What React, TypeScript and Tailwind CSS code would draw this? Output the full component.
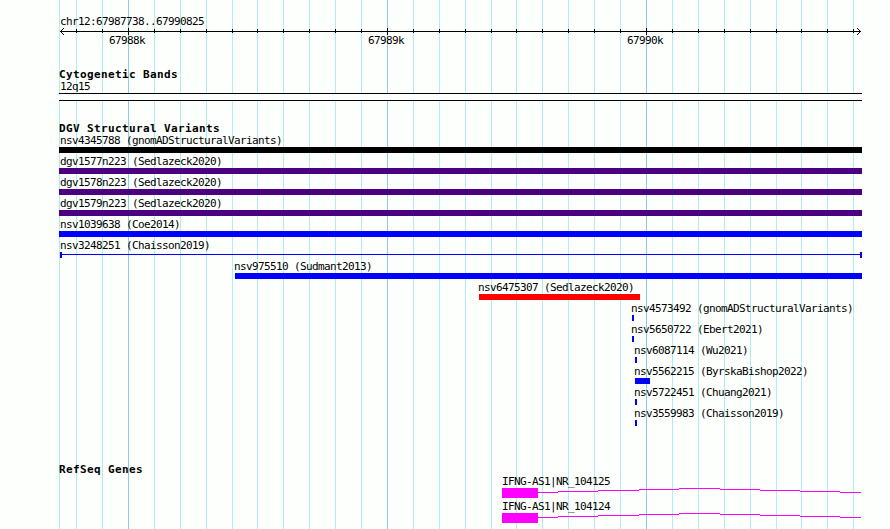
import clsx from 'clsx';

type Variant = {
  name: string;
  start: number;
  end: number;
  color: string;
  label?: number;
  thin?: boolean;
};

const minorLines = [
  59, 76, 102, 154, 180, 206, 232, 257, 283, 309, 335, 361, 413, 439, 465, 491,
  516, 542, 568, 594, 620, 672, 698, 724, 750, 776, 801, 827, 853,
];
const majorLines = [128, 387, 646];

// positions are relative to the left edge of the track (59px)
const variants: Variant[] = [
  { name: 'nsv4345788 (gnomADStructuralVariants)', start: 0, end: 803, color: 'bg-black', label: 1 },
  { name: 'dgv1577n223 (Sedlazeck2020)', start: 0, end: 803, color: 'bg-[#4b0082]', label: 1 },
  { name: 'dgv1578n223 (Sedlazeck2020)', start: 0, end: 803, color: 'bg-[#4b0082]', label: 1 },
  { name: 'dgv1579n223 (Sedlazeck2020)', start: 0, end: 803, color: 'bg-[#4b0082]', label: 1 },
  { name: 'nsv1039638 (Coe2014)', start: 0, end: 803, color: 'bg-[#0000ff]', label: 1 },
  { name: 'nsv3248251 (Chaisson2019)', start: 1, end: 803, color: 'bg-[#0000ff]', label: 1, thin: true },
  { name: 'nsv975510 (Sudmant2013)', start: 176, end: 803, color: 'bg-[#0000ff]' },
  { name: 'nsv6475307 (Sedlazeck2020)', start: 420, end: 581, color: 'bg-[#ff0000]' },
  { name: 'nsv4573492 (gnomADStructuralVariants)', start: 573, end: 575, color: 'bg-[#0000ff]' },
  { name: 'nsv5650722 (Ebert2021)', start: 573, end: 575, color: 'bg-[#0000ff]' },
  { name: 'nsv6087114 (Wu2021)', start: 576, end: 578, color: 'bg-[#0000ff]' },
  { name: 'nsv5562215 (ByrskaBishop2022)', start: 576, end: 591, color: 'bg-[#0000ff]' },
  { name: 'nsv5722451 (Chuang2021)', start: 576, end: 578, color: 'bg-[#0000ff]' },
  { name: 'nsv3559983 (Chaisson2019)', start: 576, end: 578, color: 'bg-[#0000ff]' },
];

const genes = ['IFNG-AS1|NR_104125', 'IFNG-AS1|NR_104124'];

function GridLines() {
  return (
    <svg className="absolute inset-0 -z-10" width="890" height="529" shapeRendering="crispEdges">
      {minorLines.map((x) => (
        <rect key={x} x={x} y="0" width="1" height="529" fill="#afeeee" />
      ))}
      {majorLines.map((x) => (
        <rect key={x} x={x} y="0" width="1" height="529" fill="#87ceeb" />
      ))}
    </svg>
  );
}

function Ruler() {
  return (
    <svg className="block" width="803" height="7" viewBox="59 28 803 7" shapeRendering="crispEdges">
      <rect x="60" y="31" width="801" height="1" />
      {minorLines.slice(1).map((x) => (
        <rect key={x} x={x} y="29" width="1" height="4" />
      ))}
      {majorLines.map((x) => (
        <rect key={x} x={x} y="28" width="1" height="7" />
      ))}
      {/* arrow heads */}
      {[1, 2, 3].map((d) => (
        <g key={d}>
          <rect x={60 + d} y={31 - d} width="1" height="1" />
          <rect x={60 + d} y={31 + d} width="1" height="1" />
          <rect x={860 - d} y={31 - d} width="1" height="1" />
          <rect x={860 - d} y={31 + d} width="1" height="1" />
        </g>
      ))}
    </svg>
  );
}

function Title({ children }: { children: string }) {
  return <h2 className="h-3 text-[11px] leading-[14px] font-bold tracking-[0.378px]">{children}</h2>;
}

function VariantRow({ name, start, end, color, label, thin }: Variant) {
  return (
    <div className="h-[21px]">
      <div className="h-[15px] pt-0.5" style={{ marginLeft: label ?? start - 1 }}>{name}</div>
      {thin ? (
        <div className="flex h-1.5" style={{ marginLeft: start, width: end - start }}>
          <div className={clsx('w-0.5', color)} />
          <div className={clsx('mt-0.5 h-px grow', color)} />
          <div className={clsx('w-0.5', color)} />
        </div>
      ) : (
        <div className={clsx('h-1.5', color)} style={{ marginLeft: start, width: end - start }} />
      )}
    </div>
  );
}

function Gene({ name }: { name: string }) {
  // the intron climbs one pixel per segment, then comes back down
  const steps = [
    [538, 558, 4], [558, 598, 3], [598, 639, 2], [639, 679, 1], [679, 720, 0],
    [720, 760, 1], [760, 800, 2], [800, 840, 3], [840, 861, 4],
  ];
  return (
    <div className="ml-[443px] h-[25px]">
      <div className="h-[15px] pt-0.5">{name}</div>
      <div className="flex h-2.5">
        <div className="w-9 bg-[#ff00ff]" />
        <svg width="323" height="10" viewBox="538 0 323 10" fill="#ff00ff" shapeRendering="crispEdges">
          {steps.map(([from, to, y]) => (
            <rect key={from} x={from} y={y} width={to - from} height="1" />
          ))}
        </svg>
      </div>
    </div>
  );
}

export default function App() {
  return (
    <div className="relative isolate h-[529px] w-[890px] overflow-hidden bg-[#fdfffc] pl-[59px] font-['DejaVu_Sans_Mono','Liberation_Mono',monospace] text-[11px] leading-[13px] tracking-[-0.622px] whitespace-pre text-black">
      <GridLines />
      <div className="w-[803px]">
        {/* SCALE */}
        <div className="h-7 pt-[15px] pl-px">chr12:67987738..67990825</div>
        <Ruler />
        <div className="flex h-[33px] gap-[223px] pl-[50px] leading-[11px]">
          <span className="w-9">67988k</span>
          <span className="w-9">67989k</span>
          <span className="w-9">67990k</span>
        </div>

        {/* CYTOGENETIC BANDS */}
        <Title>Cytogenetic Bands</Title>
        <div className="h-[13px] pl-px">12q15</div>
        <div className="h-2 border-y border-black bg-[#fdfffc]" />

        {/* VARIANTS */}
        <div className="pt-[21px]">
          <Title>DGV Structural Variants</Title>
        </div>
        <div className="-mt-0.5">
          {variants.map((v) => (
            <VariantRow key={v.name} {...v} />
          ))}
        </div>

        {/* GENES */}
        <div className="h-[47px] pt-[37px]">
          <Title>RefSeq Genes</Title>
        </div>
        {genes.map((name) => (
          <Gene key={name} name={name} />
        ))}
      </div>
    </div>
  );
}
